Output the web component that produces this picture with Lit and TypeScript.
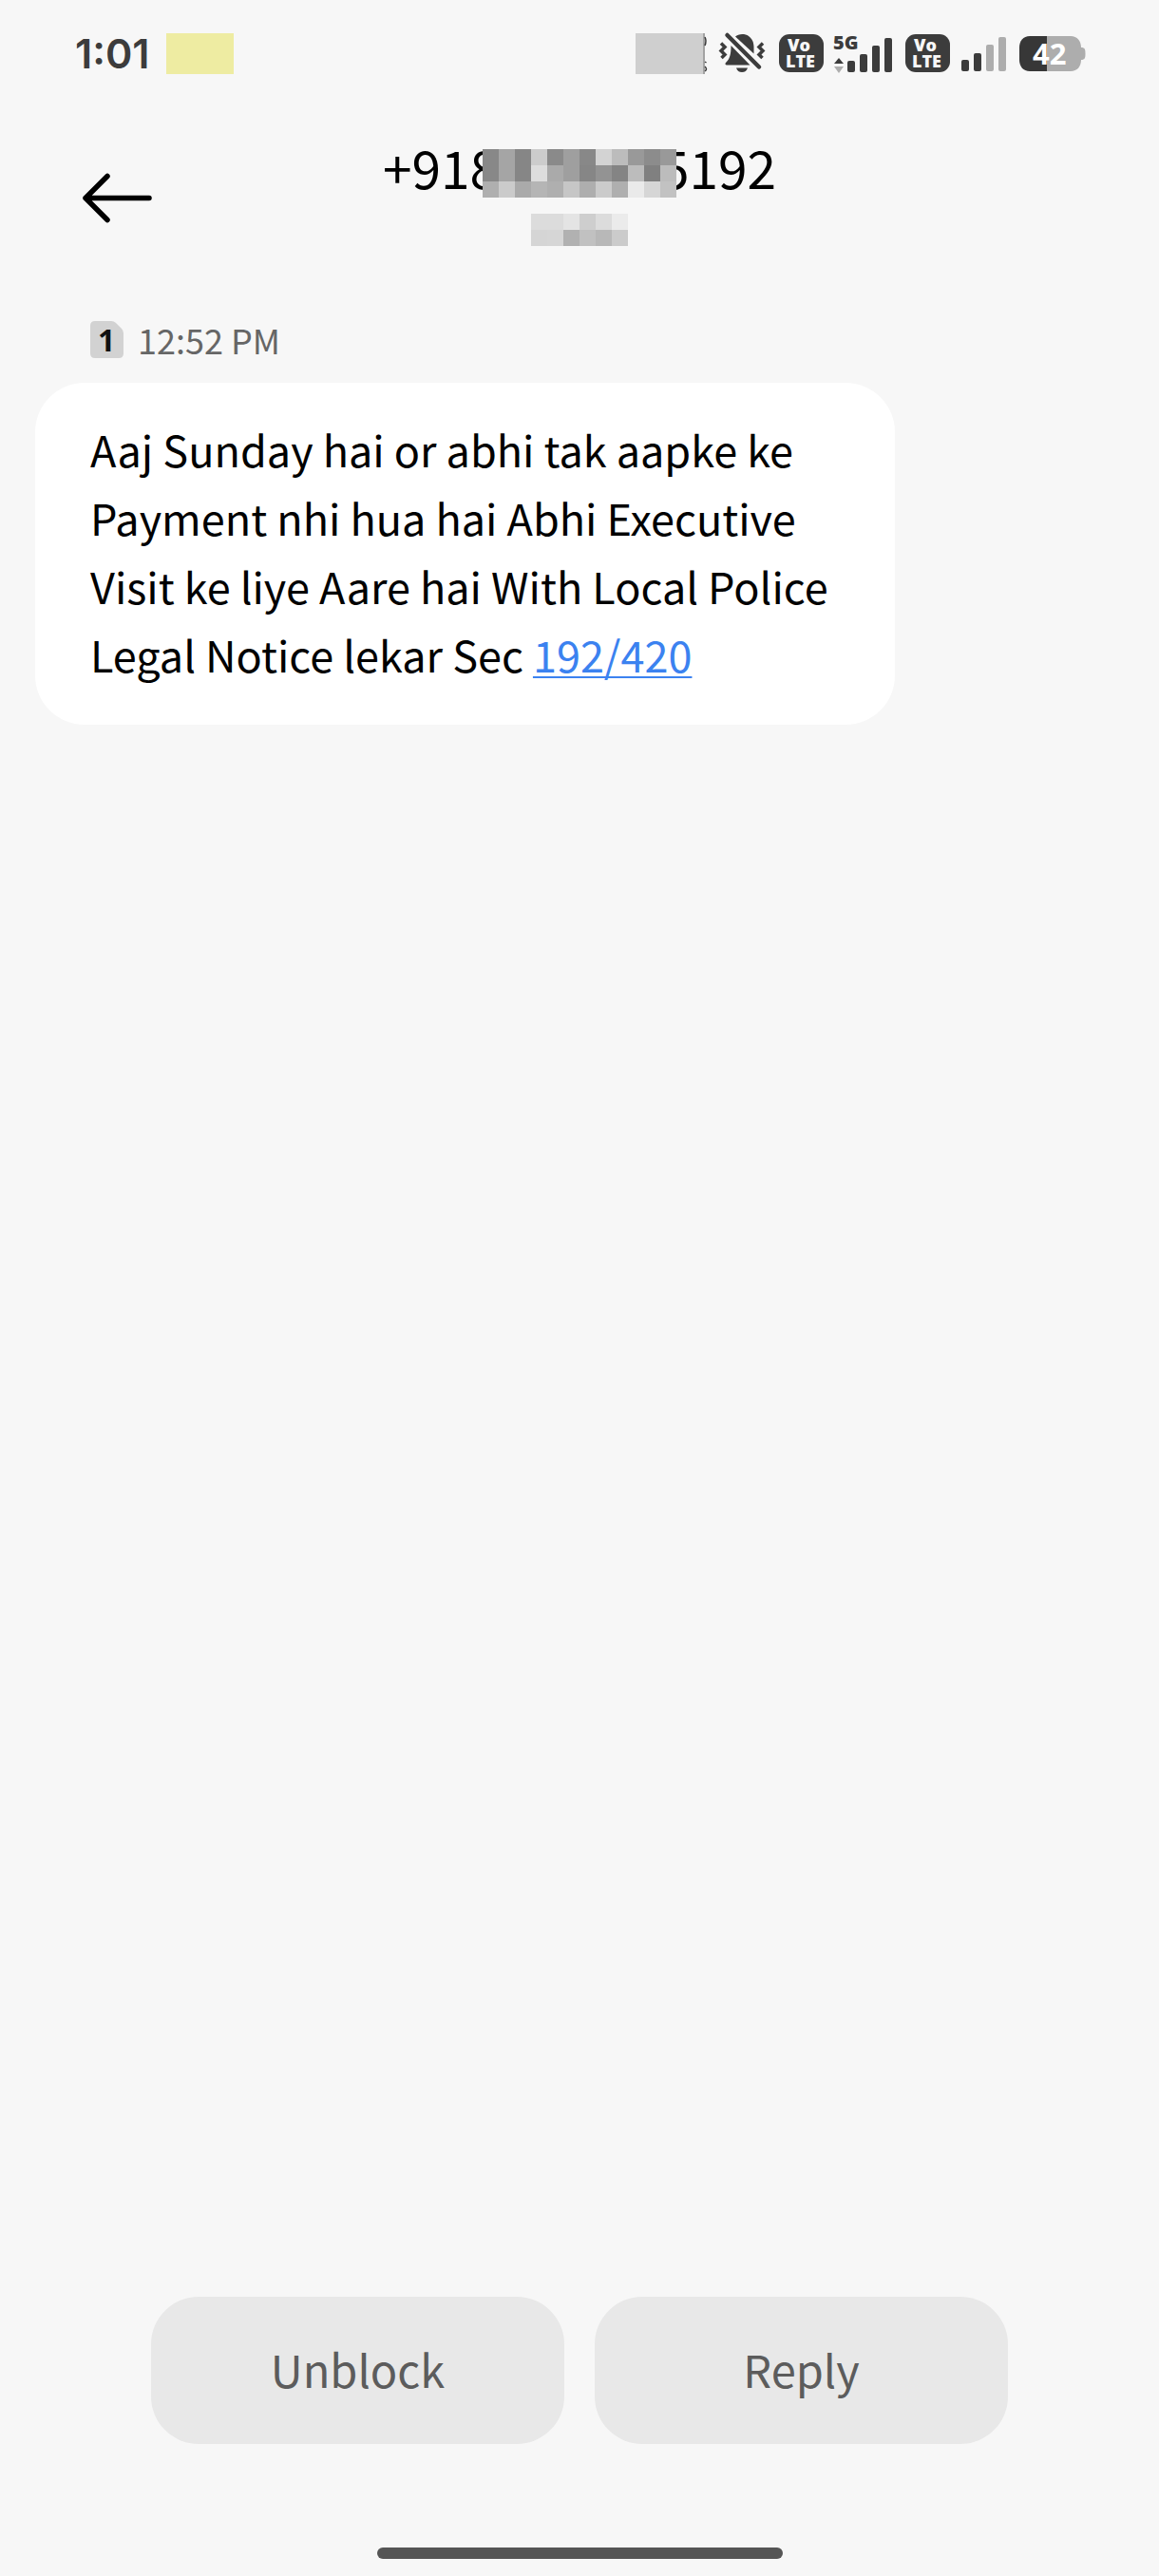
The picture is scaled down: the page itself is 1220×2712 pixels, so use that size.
import { LitElement, html, svg, css } from "lit";
import { customElement, property } from "lit/decorators.js";

const UI = css`"Noto Sans CJK SC", "Open Sans", sans-serif`;
const DARK = "#3c3c3c";
const PALE = "#adadad";

@customElement("volte-badge")
class VolteBadge extends LitElement {
  static styles = css`
    :host { display: block; }
    svg { display: block; overflow: visible; }
    text { font-family: "Open Sans", sans-serif; font-weight: 800; font-size: 18px; fill: #f7f7f7; }
  `;
  render() {
    return html`<svg width="47" height="40" viewBox="0 0 47 40" role="img" aria-label="VoLTE">
      <rect width="47" height="40" rx="11" fill=${DARK}></rect>
      <text x="9" y="18">Vo</text>
      <text x="7" y="35">LTE</text>
    </svg>`;
  }
}

@customElement("signal-bars")
class SignalBars extends LitElement {
  @property({ type: Number }) level = 4;
  static styles = css`
    :host { display: block; }
    svg { display: block; }
  `;
  render() {
    return html`<svg width="47" height="37" viewBox="0 0 47 37" role="img" aria-label="Signal">
      ${[12, 19, 28, 36].map(
        (h, i) => svg`<rect x=${i * 13} y=${37 - h} width="8" height=${h} rx="2" fill=${i < this.level ? DARK : PALE}></rect>`
      )}
    </svg>`;
  }
}

@customElement("pixel-mosaic")
class PixelMosaic extends LitElement {
  @property({ attribute: false }) rows: string[] = [];
  static styles = css`
    :host { display: block; }
    svg { display: block; }
  `;
  render() {
    const cell = 17;
    const grid = this.rows.map((r) => r.split(" "));
    const w = (grid[0]?.length ?? 0) * cell;
    const h = grid.length * cell;
    return html`<svg width=${w} height=${h} viewBox="0 0 ${w} ${h}" shape-rendering="crispEdges" aria-hidden="true">
      ${grid.map((r, y) =>
        r.map((c, x) => svg`<rect x=${x * cell} y=${y * cell} width=${cell} height=${cell} fill=${"#" + c + c + c}></rect>`)
      )}
    </svg>`;
  }
}

@customElement("status-bar")
class StatusBar extends LitElement {
  static styles = css`
    :host {
      display: flex;
      align-items: center;
      justify-content: space-between;
      height: 112px;
      padding: 0 77px 0 79px;
      color: #3c3c3c;
    }
    .left, .right { display: flex; align-items: center; }
    .left { gap: 18px; }
    .time { font: 600 43px/48px Inter, sans-serif; }
    .note { width: 71px; height: 43px; background: #eeeca2; }
    .hidden { width: 71px; height: 43px; background: #cfcfcf; border-right: 2px solid #a3a3a3; }
    .traces { margin-right: -3px; }
    .bell, .volte, .battery { margin-left: 14px; }
    .net { margin-left: 10px; }
    .sim2 { margin-left: 12px; }
    svg { display: block; overflow: visible; }
    .g5 { font: 800 20px "Open Sans", sans-serif; fill: #3c3c3c; }
    .pct { font: 700 31px "Open Sans", sans-serif; fill: #ffffff; }
  `;
  render() {
    return html`
      <div class="left">
        <span class="time">1:01</span>
        <span class="note"></span>
      </div>
      <div class="right">
        <span class="hidden"></span>
        <svg class="traces" width="3" height="43" viewBox="0 0 3 43" aria-hidden="true">
          <path d="M0 4Q2 8 0 13M0 30L1.500 31M0 35Q3 38 0 40" fill="none" stroke=${DARK} stroke-width="1.500"></path>
        </svg>
        <svg class="bell" width="50" height="44" viewBox="0 0 50 44" role="img" aria-label="Muted">
          <path d="M18 4.500C21 1.500 28 1 32 4C36 7 37.500 11 37.500 16V22.500Z" fill=${DARK}></path>
          <path d="M13.500 14L33.500 34.500H9C7.500 34.500 7 33 8 32C12 28 13.500 24 13.500 14Z" fill=${DARK}></path>
          <path d="M19 37.500H31C30 40.500 28 42 25 42S20 40.500 19 37.500Z" fill=${DARK}></path>
          <path d="M9.500 3L43 36.500" stroke=${DARK} stroke-width="4.500" stroke-linecap="round"></path>
          <path d="M3 11.500L7 15.500L3 19.500L7 23.500L3.500 27M47 11.500L43 15.500L47 19.500L43 23.500L46.500 27" fill="none" stroke=${DARK} stroke-width="3.500"></path>
        </svg>
        <volte-badge class="volte"></volte-badge>
        <svg class="net" width="62" height="43" viewBox="0 0 62 43" role="img" aria-label="5G signal">
          <text class="g5" x="0" y="17">5G</text>
          <path d="M6 26L11 32H1Z" fill=${DARK}></path>
          <path d="M1 35H11L6 42Z" fill=${PALE}></path>
          <rect x="15" y="29" width="8" height="12" rx="2" fill=${DARK}></rect>
          <rect x="28" y="22" width="8" height="19" rx="2" fill=${DARK}></rect>
          <rect x="41" y="13" width="8" height="28" rx="2" fill=${DARK}></rect>
          <rect x="54" y="5" width="8" height="36" rx="2" fill=${DARK}></rect>
        </svg>
        <volte-badge class="volte"></volte-badge>
        <signal-bars class="sim2" level="2"></signal-bars>
        <svg class="battery" width="70" height="38" viewBox="0 0 70 38" role="img" aria-label="Battery 42">
          <path d="M11 1H29V38H11C4 38 0 33 0 26V13C0 6 4 1 11 1Z" fill="#373737"></path>
          <path d="M29 1H54C61 1 65 6 65 13C69 13 69.500 15 69.500 19.500S69 26 65 26C65 33 61 38 54 38H29Z" fill=${PALE}></path>
          <text class="pct" x="14" y="31">42</text>
        </svg>
      </div>
    `;
  }
}

@customElement("app-root")
class AppRoot extends LitElement {
  static styles = css`
    :host {
      display: flex;
      flex-direction: column;
      min-height: 100vh;
      box-sizing: border-box;
      background: #f7f7f7;
      color: #000;
      font-family: ${UI};
    }
    header {
      display: grid;
      grid-template-columns: 160px 1fr 160px;
      padding-top: 30px;
      height: 188px;
      box-sizing: border-box;
    }
    .back {
      justify-self: end;
      align-self: start;
      width: 76px;
      height: 56px;
      margin-top: 38px;
      padding: 0;
      border: 0;
      background: none;
    }
    .back svg { display: block; }
    .contact { display: flex; flex-direction: column; align-items: center; gap: 17px; }
    h1 {
      display: flex;
      align-items: center;
      margin: 0;
      font-weight: 400;
      font-size: 55px;
      line-height: 60px;
    }
    .mask { z-index: 1; margin: 15px -17px 0 -17px; }
    main { flex: 1; padding: 0 37px; }
    .meta {
      display: flex;
      align-items: center;
      gap: 15px;
      height: 103px;
      padding: 12px 58px 0;
      box-sizing: border-box;
    }
    .meta svg { display: block; overflow: visible; }
    .sim { font: 700 32px "Open Sans", sans-serif; fill: #111; }
    time { font-size: 36px; line-height: 40px; padding-bottom: 2px; color: #666; }
    .bubble {
      box-sizing: border-box;
      width: fit-content;
      max-width: 79%;
      margin: 0;
      padding: 34px 58px 38px;
      border-radius: 52px;
      background: #fff;
      font-size: 45px;
      line-height: 72px;
    }
    .bubble a { color: #3b82f0; text-decoration: underline; text-decoration-thickness: 2px; text-underline-offset: 4px; }
    .actions { display: flex; gap: 32px; padding: 0 159px; }
    .actions button {
      flex: 1;
      height: 155px;
      padding: 0 0 4px;
      border: 0;
      border-radius: 50px;
      background: #e8e8e8;
      color: #5c5c5c;
      font: 400 47px/60px ${UI};
    }
    .home { align-self: center; width: 35%; height: 12px; margin: 109px 0 18px; border-radius: 6px; background: #555; }
  `;
  render() {
    return html`
      <status-bar></status-bar>
      <header>
        <button class="back" aria-label="Back">
          <svg width="76" height="56" viewBox="0 0 76 56" fill="none" stroke="#000" stroke-width="5.500" stroke-linecap="round" stroke-linejoin="round">
            <path d="M73 28.500H6M29 5.500L6 28.500L29 51.500"></path>
          </svg>
        </button>
        <div class="contact">
          <h1>
            <span>+918</span>
            <pixel-mosaic class="mask" .rows=${[
              "88 a5 86 cc 8a 9f 88 d3 bc 99 8c 99",
              "88 a5 86 dd aa 9f 86 93 84 bc 80 bc",
              "af cb aa b5 af c6 ae cb af ea d6 c2",
            ]}></pixel-mosaic>
            <span>5192</span>
          </h1>
          <pixel-mosaic .rows=${["dc dc e4 ce dc eb", "d5 d6 b1 c1 b8 cb"]}></pixel-mosaic>
        </div>
      </header>
      <main>
        <div class="meta">
          <svg width="35" height="39" viewBox="0 0 35 39" role="img" aria-label="SIM 1">
            <path d="M5 0H22Q25 0 27 2L33 8Q35 10 35 13V34Q35 39 30 39H5Q0 39 0 34V5Q0 0 5 0Z" fill="#d2d2d2"></path>
            <text class="sim" x="8" y="32">1</text>
          </svg>
          <time>12:52 PM</time>
        </div>
        <p class="bubble">Aaj Sunday hai or abhi tak aapke ke Payment nhi hua hai Abhi Executive Visit ke liye Aare hai With Local Police Legal Notice lekar Sec <a href="#">192/420</a></p>
      </main>
      <div class="actions">
        <button>Unblock</button>
        <button>Reply</button>
      </div>
      <div class="home"></div>
    `;
  }
}
